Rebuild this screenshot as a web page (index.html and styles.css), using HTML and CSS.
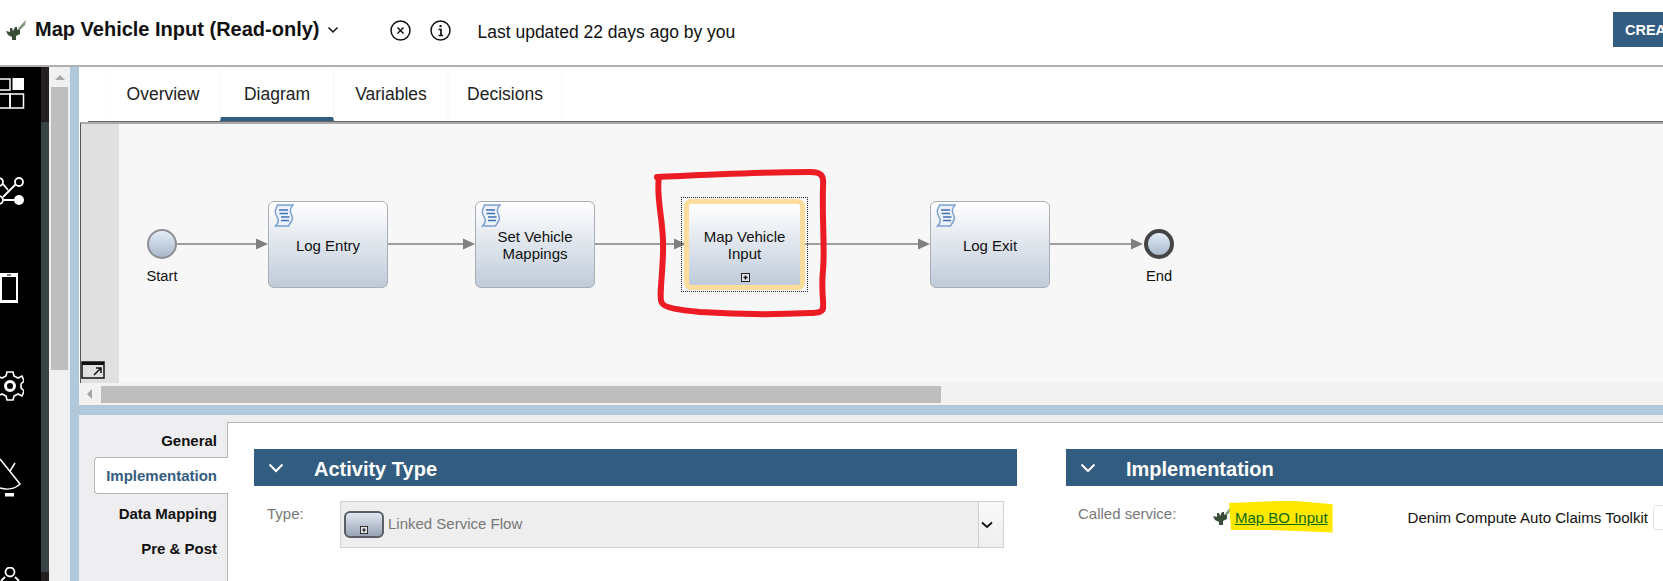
FILE: index.html
```html
<!DOCTYPE html>
<html lang="en">
<head>
    <meta charset="UTF-8">
    <meta name="viewport" content="width=device-width, initial-scale=1.0">
    <title>Map Vehicle Input</title>
    <link rel="stylesheet" href="styles.css">
</head>
<body>

    <svg class="defs" width="0" height="0">
        <defs>
            <symbol id="plug" viewBox="0 0 20 20">
                <path d="M10 11 L16 4 L20 0 L19 5 L13 11 Z" fill="#7f9a78"/>
                <path d="M0 11 L4 12 L4 8 L6 8 L7 11 L9 7 L11 7 L11 10 L14 10 L14 14 L10 16 L10 20 L6 20 L6 17 L2 15 Z" fill="#3a4d38"/>
            </symbol>
            <symbol id="script" viewBox="0 0 20 23">
                <path d="M3.500 1 H19 C16.500 3.500 15.500 6 17 9.500 C18.500 12.500 19 15 17.500 17 L14.500 22 H1.500 C4 19.500 5 17.500 4 15 C2.500 12 0.500 9 1.500 6 Z" fill="#eef3fa" stroke="#7a9fd0" stroke-width="1.500"/>
                <path d="M5 6 H14 M5.500 9.500 H14 M7 13 H15.500 M7 16.500 H15" stroke="#3f6fb5" stroke-width="1.600" fill="none"/>
            </symbol>
            <symbol id="sub" viewBox="0 0 9 9">
                <rect x="0.500" y="0.500" width="8" height="8" fill="#dfe3e8" stroke="#222"/>
                <path d="M2.500 4.500 H6.500 M4.500 2.500 V6.500" stroke="#111" stroke-width="1.400"/>
            </symbol>
        </defs>
    </svg>

    <header class="topbar">
        <svg class="title-icon"><use href="#plug"/></svg>
        <h1 class="title">Map Vehicle Input (Read-only)</h1>
        <svg class="title-caret" width="12" height="8" viewBox="0 0 12 8"><path d="M1.500 1.500 L6 6 L10.500 1.500" fill="none" stroke="#111" stroke-width="1.500"/></svg>
        <svg class="round-icon close-icon" width="21" height="21" viewBox="0 0 21 21">
            <circle cx="10.500" cy="10.500" r="9.500" fill="none" stroke="#111" stroke-width="1.500"/>
            <path d="M7.500 7.500 L13.500 13.500 M13.500 7.500 L7.500 13.500" stroke="#111" stroke-width="1.500"/>
        </svg>
        <svg class="round-icon info-icon" width="21" height="21" viewBox="0 0 21 21">
            <circle cx="10.500" cy="10.500" r="9.500" fill="none" stroke="#111" stroke-width="1.500"/>
            <path d="M8.500 9.500 H11 V15 M8.500 15.500 H13" fill="none" stroke="#111" stroke-width="1.700"/>
            <rect x="9.500" y="5" width="2" height="2.200" fill="#111"/>
        </svg>
        <span class="updated">Last updated 22 days ago by you</span>
        <button class="create">CREA</button>
    </header>

    <div class="workspace">
        <nav class="sidebar">
            <svg class="side-icon icon-grid" width="25" height="31" viewBox="0 0 25 31">
                <rect x="-8" y="1" width="18" height="11" fill="none" stroke="#fff" stroke-width="1.500"/>
                <rect x="12.500" y="0" width="11.500" height="12" fill="#fff"/>
                <rect x="-8" y="16" width="18" height="14" fill="none" stroke="#fff" stroke-width="1.500"/>
                <rect x="10" y="16" width="13.500" height="14" fill="none" stroke="#fff" stroke-width="1.500"/>
            </svg>
            <svg class="side-icon icon-flow" width="25" height="30" viewBox="0 0 25 30">
                <circle cx="19" cy="5" r="4" fill="none" stroke="#fff" stroke-width="1.800"/>
                <circle cx="19" cy="23" r="5" fill="#fff"/>
                <circle cx="-1" cy="5" r="4" fill="none" stroke="#fff" stroke-width="1.800"/>
                <circle cx="-1" cy="23" r="4" fill="none" stroke="#fff" stroke-width="1.800"/>
                <path d="M15.500 7.500 L3 20 M3 7 L8 13 M4 23 H14" fill="none" stroke="#fff" stroke-width="1.800"/>
            </svg>
            <svg class="side-icon icon-mobile" width="19" height="30" viewBox="0 0 19 30">
                <rect x="-1" y="0" width="19" height="30" fill="#fff"/>
                <rect x="2" y="4" width="14" height="23" fill="#000"/>
                <rect x="7" y="1.500" width="4" height="1" fill="#000"/>
            </svg>
            <svg class="side-icon icon-gear" width="24" height="30" viewBox="0 0 24 30">
                <path d="M7 1 H13 L14 5 L18 7 L22 5 L24 10 L21 13 V17 L24 20 L22 25 L18 23 L14 25 L13 29 H7 L6 25 L2 23 L-3 25 L-5 20 L-1 17 V13 L-5 10 L-3 5 L2 7 L6 5 Z" fill="none" stroke="#fff" stroke-width="1.600"/>
                <circle cx="10" cy="15" r="4.500" fill="none" stroke="#fff" stroke-width="3"/>
            </svg>
            <svg class="side-icon icon-dish" width="22" height="39" viewBox="0 0 22 39">
                <path d="M0 1 L20 26 C15 31 7 32 0 30" fill="none" stroke="#fff" stroke-width="1.500"/>
                <path d="M10 13 L15 5" stroke="#fff" stroke-width="1.500"/>
                <rect x="5" y="35" width="9" height="3.500" fill="#fff"/>
            </svg>
            <svg class="side-icon icon-flow2" width="25" height="14" viewBox="0 0 25 14">
                <circle cx="10" cy="5" r="4.500" fill="none" stroke="#fff" stroke-width="1.800"/>
                <path d="M5 10 L1 14 M15 10 L19 14" stroke="#fff" stroke-width="1.800"/>
            </svg>
        </nav>
        <div class="side-strip"></div>
        <div class="v-scroll">
            <span class="arrow-up"></span>
            <span class="v-thumb"></span>
        </div>
        <div class="blue-strip"></div>

        <main class="main">
            <div class="tabs">
                <a class="tab">Overview</a>
                <a class="tab active">Diagram</a>
                <a class="tab">Variables</a>
                <a class="tab">Decisions</a>
            </div>

            <div class="canvas">
                <div class="canvas-gutter"></div>

                <svg class="wires" width="1583" height="261" viewBox="80 122 1583 261">
                    <g stroke="#808080" stroke-width="1.500" fill="none">
                        <path d="M177 244 H258"/>
                        <path d="M388 244 H465"/>
                        <path d="M594 244 H676"/>
                        <path d="M804 244 H920"/>
                        <path d="M1049 244 H1133"/>
                    </g>
                    <g fill="#808080">
                        <path d="M256 238.500 L268 244 L256 249.500 Z"/>
                        <path d="M463 238.500 L475 244 L463 249.500 Z"/>
                        <path d="M674 238.500 L686 244 L674 249.500 Z"/>
                        <path d="M918 238.500 L930 244 L918 249.500 Z"/>
                        <path d="M1131 238.500 L1143 244 L1131 249.500 Z"/>
                    </g>
                </svg>

                <div class="event start"></div>
                <div class="event-label start-label">Start</div>

                <div class="task task-log-entry">
                    <svg class="task-icon"><use href="#script"/></svg>
                    <span>Log Entry</span>
                </div>
                <div class="task task-set">
                    <svg class="task-icon"><use href="#script"/></svg>
                    <span>Set Vehicle<br>Mappings</span>
                </div>

                <div class="selected">
                    <div class="task task-map">
                        <span>Map Vehicle<br>Input</span>
                        <svg class="sub-icon"><use href="#sub"/></svg>
                    </div>
                </div>

                <div class="task task-log-exit">
                    <svg class="task-icon"><use href="#script"/></svg>
                    <span>Log Exit</span>
                </div>

                <div class="event end"></div>
                <div class="event-label end-label">End</div>

                <svg class="annotation" width="1583" height="261" viewBox="80 122 1583 261">
                    <path d="M657 177 C700 175 760 172 810 172 C822 172 824 176 823 186 C822 220 825 250 823 270 C821 290 824 305 823 306 C824 312 818 313 810 313 C770 315 730 314 700 312 C680 310 664 308 662 303 C658 298 664 270 663 240 C662 215 656 195 659 177" fill="none" stroke="#ec1c24" stroke-width="6" stroke-linecap="round" stroke-linejoin="round"/>
                </svg>

                <div class="corner-btn">
                    <svg width="24" height="18" viewBox="0 0 24 18">
                        <rect x="1" y="1" width="22" height="16" fill="#e0e0e0" stroke="#111" stroke-width="1.500"/>
                        <rect x="1" y="1" width="22" height="3" fill="#111"/>
                        <path d="M13 14 L20 7 M15 7 H20 V12" fill="none" stroke="#111" stroke-width="1.500"/>
                    </svg>
                </div>
            </div>

            <div class="h-scroll">
                <span class="arrow-left"></span>
                <span class="h-thumb"></span>
            </div>
            <div class="splitter"></div>

            <section class="props">
                <div class="prop-tabs">
                    <a class="prop-tab">General</a>
                    <a class="prop-tab active">Implementation</a>
                    <a class="prop-tab">Data Mapping</a>
                    <a class="prop-tab">Pre &amp; Post</a>
                </div>
                <div class="prop-body">
                    <div class="group group-activity">
                        <div class="group-head">
                            <svg class="group-caret" width="16" height="10" viewBox="0 0 16 10"><path d="M1.500 1.500 L8 8 L14.500 1.500" fill="none" stroke="#fff" stroke-width="2"/></svg>
                            <span class="group-title">Activity Type</span>
                        </div>
                        <div class="type-row">
                            <label class="field-label">Type:</label>
                            <div class="type-select">
                                <span class="mini-task"><svg><use href="#sub"/></svg></span>
                                <span class="type-value">Linked Service Flow</span>
                                <span class="type-btn">
                                    <svg width="12" height="8" viewBox="0 0 12 8"><path d="M1 1.500 L6 6 L11 1.500" fill="none" stroke="#111" stroke-width="1.800"/></svg>
                                </span>
                            </div>
                        </div>
                    </div>

                    <div class="group group-impl">
                        <div class="group-head">
                            <svg class="group-caret" width="16" height="10" viewBox="0 0 16 10"><path d="M1.500 1.500 L8 8 L14.500 1.500" fill="none" stroke="#fff" stroke-width="2"/></svg>
                            <span class="group-title">Implementation</span>
                        </div>
                        <div class="called-row">
                            <label class="field-label called-label">Called service:</label>
                            <svg class="called-icon"><use href="#plug"/></svg>
                            <a class="called-link">Map BO Input</a>
                            <span class="toolkit">Denim Compute Auto Claims Toolkit</span>
                            <span class="toolkit-box"></span>
                        </div>
                    </div>
                </div>
            </section>
        </main>
    </div>

</body>
</html>
```

FILE: styles.css
```css
* {
    box-sizing: border-box;
}
html, body {
    height: 100%;
}
body {
    margin: 0;
    width: 1663px;
    height: 581px;
    overflow: hidden;
    display: flex;
    flex-direction: column;
    font-family: "Liberation Sans", Arial, sans-serif;
    color: #111;
    background-color: #fff;
}
.defs {
    position: absolute;
}

/* top bar */
.topbar {
    height: 67px;
    flex: none;
    display: flex;
    align-items: center;
    border-bottom: 2px solid #b0b0b0;
    padding-left: 6px;
}
.title-icon {
    width: 20px;
    height: 20px;
    margin-right: 9px;
    position: relative;
    top: -3px;
}
.title {
    margin: 0;
    font-size: 20px;
    font-weight: bold;
    white-space: nowrap;
    position: relative;
    top: -3px;
}
.title-caret {
    margin-left: 8px;
    position: relative;
    top: -3px;
}
.close-icon {
    margin-left: 51px;
}
.info-icon {
    margin-left: 19px;
}
.round-icon {
    flex: none;
    position: relative;
    top: -2px;
}
.updated {
    margin-left: 26px;
    font-size: 17.500px;
    white-space: nowrap;
}
.create {
    margin-left: auto;
    width: 50px;
    height: 35px;
    position: relative;
    top: -3px;
    border: none;
    overflow: hidden;
    padding: 0 0 0 12px;
    text-align: left;
    white-space: nowrap;
    background-color: #335d80;
    color: #fff;
    font-family: inherit;
    font-size: 14.500px;
    font-weight: bold;
}

/* left rail */
.workspace {
    flex: 1;
    display: flex;
    min-height: 0;
}
.sidebar {
    width: 41px;
    flex: none;
    background-color: #000;
    overflow: hidden;
    display: flex;
    flex-direction: column;
    align-items: flex-start;
}
.side-icon {
    display: block;
    flex: none;
}
.icon-grid { margin-top: 11px; }
.icon-flow { margin-top: 68px; }
.icon-mobile { margin-top: 66px; }
.icon-gear { margin-top: 68px; }
.icon-dish { margin-top: 57px; }
.icon-flow2 { margin-top: 70px; }
.side-strip {
    width: 8px;
    flex: none;
    background: linear-gradient(#231f20 0, #231f20 55px, #384345 55px, #384345 505px, #231f20 505px);
}
.v-scroll {
    width: 21px;
    flex: none;
    background-color: #f0f0f0;
    padding: 8px 2px 0;
    display: flex;
    flex-direction: column;
    align-items: center;
}
.arrow-up {
    width: 0;
    height: 0;
    border-left: 5px solid transparent;
    border-right: 5px solid transparent;
    border-bottom: 5px solid #a6a6a6;
}
.v-thumb {
    width: 17px;
    height: 283px;
    margin-top: 7px;
    background-color: #bebebe;
}
.blue-strip {
    width: 9px;
    flex: none;
    background-color: #b0c8da;
}

/* main column */
.main {
    flex: 1;
    min-width: 0;
    display: flex;
    flex-direction: column;
}
.tabs {
    height: 55px;
    flex: none;
    display: flex;
    padding-left: 27px;
    margin-left: 9px;
    border-bottom: 1px solid #666;
}
.tab {
    width: 114px;
    display: flex;
    align-items: center;
    justify-content: center;
    font-size: 17.500px;
    border: 1px solid #fafafa;
    border-bottom: none;
    border-radius: 6px 6px 0 0;
    color: #222;
}
.tabs .tab:first-child {
    margin-left: -9px;
}
.tab.active {
    padding-top: 4px;
    border-bottom: 4px solid #335d80;
}
.canvas {
    position: relative;
    height: 261px;
    flex: none;
    margin-left: 1px;
    background-color: #f7f7f7;
    border-top: 2px solid #aaa;
    border-left: 1px solid #555;
    overflow: hidden;
}
.canvas > * {
    position: absolute;
}
.canvas-gutter {
    left: 0;
    top: 0;
    bottom: 0;
    width: 38px;
    background-color: #e0e0e0;
}

/* diagram nodes: canvas origin is 81,124 on the page */
.wires {
    left: -1px;
    top: -2px;
}
.annotation {
    left: -1px;
    top: -2px;
    pointer-events: none;
}
.event {
    width: 30px;
    height: 30px;
    border-radius: 50%;
    background: linear-gradient(#e3edf8, #aab8ca);
    top: 105px;
}
.start {
    left: 66px;
    border: 2px solid #8d8f92;
}
.end {
    left: 1063px;
    border: 4px solid #454545;
}
.event-label {
    font-size: 14.700px;
    top: 144px;
    width: 60px;
    text-align: center;
}
.start-label {
    left: 51px;
}
.end-label {
    left: 1048px;
}
.task {
    width: 120px;
    height: 87px;
    top: 77px;
    display: flex;
    align-items: center;
    justify-content: center;
    text-align: center;
    font-size: 15px;
    line-height: 17px;
    padding-top: 1px;
    background: linear-gradient(#fff, #bfcbda);
    border: 1.500px solid #a9aeb5;
    border-radius: 6px;
}
.task-log-entry {
    left: 187px;
}
.task-set {
    left: 394px;
}
.task-log-exit {
    left: 849px;
}
.task-icon {
    position: absolute;
    left: 5px;
    top: 2px;
    width: 20px;
    height: 23px;
}
.selected {
    left: 600px;
    top: 73px;
    width: 127px;
    height: 95px;
    border: 1px dotted #222;
    padding: 1px 2px;
}
.selected .task {
    position: relative;
    top: 0;
    width: 100%;
    height: 100%;
    border: 5px solid #fedd9c;
    border-radius: 7px;
}
.sub-icon {
    position: absolute;
    left: 52px;
    bottom: 3px;
    width: 9px;
    height: 9px;
}
.corner-btn {
    left: 0;
    top: 237px;
    height: 18px;
}
.corner-btn svg {
    display: block;
}
.h-scroll {
    height: 22px;
    flex: none;
    background-color: #f2f2f2;
    display: flex;
    align-items: center;
    padding-left: 8px;
}
.arrow-left {
    width: 0;
    height: 0;
    border-top: 5px solid transparent;
    border-bottom: 5px solid transparent;
    border-right: 5px solid #a6a6a6;
}
.h-thumb {
    width: 840px;
    height: 17px;
    margin-left: 9px;
    background-color: #bebebe;
}
.splitter {
    height: 10px;
    flex: none;
    background-color: #b0c8da;
}

/* properties panel */
.props {
    flex: 1;
    display: flex;
    min-height: 0;
    background-color: #eeeef0;
}
.prop-tabs {
    width: 148px;
    flex: none;
    padding-top: 8px;
    display: flex;
    flex-direction: column;
    align-items: flex-end;
    font-size: 15px;
    font-weight: bold;
}
.prop-tab {
    height: 34px;
    display: flex;
    align-items: center;
    padding-right: 10px;
    color: #111;
}
.prop-tab + .prop-tab:not(.active) {
    margin-top: 2px;
}
.prop-tabs .prop-tab:last-child {
    margin-top: 1px;
}
.prop-tab.active {
    width: 134px;
    height: 37px;
    margin-right: -1px;
    padding-right: 11px;
    justify-content: flex-end;
    position: relative;
    z-index: 1;
    color: #335d80;
    background-color: #fff;
    border: 1px solid #b0b8b8;
    border-right: none;
    border-radius: 4px 0 0 4px;
}
.prop-body {
    flex: 1;
    min-width: 0;
    margin-top: 7px;
    padding: 26px 0 0 26px;
    display: flex;
    gap: 49px;
    background-color: #fff;
    border-top: 1px solid #b0b8b8;
    border-left: 1px solid #b0b8b8;
}
.group-activity {
    width: 763px;
    flex: none;
}
.group-impl {
    flex: 1;
    min-width: 0;
}
.group-head {
    height: 37px;
    display: flex;
    align-items: center;
    background-color: #335d80;
    color: #fff;
    font-size: 20px;
    font-weight: bold;
    white-space: nowrap;
}
.group-title {
    padding-top: 3px;
}
.group-caret {
    margin-left: 14px;
    margin-right: 30px;
    flex: none;
}
.field-label {
    font-size: 15px;
    color: #777;
}
.type-row {
    display: flex;
    margin-top: 15px;
}
.type-row .field-label {
    width: 86px;
    padding: 4px 0 0 13px;
}
.type-select {
    width: 664px;
    height: 47px;
    display: flex;
    align-items: center;
    padding-left: 3px;
    background-color: #eee;
    border: 1px solid #d0d0d0;
}
.mini-task {
    width: 40px;
    height: 27px;
    flex: none;
    display: flex;
    justify-content: center;
    align-items: flex-end;
    padding-bottom: 2px;
    background: linear-gradient(#dfe6f0, #9aa5b5);
    border: 2px solid #5a5f66;
    border-radius: 6px;
}
.mini-task svg {
    width: 8px;
    height: 8px;
}
.type-value {
    margin-left: 4px;
    padding-bottom: 2px;
    font-size: 15px;
    color: #777;
}
.type-btn {
    margin-left: auto;
    width: 25px;
    height: 100%;
    display: flex;
    align-items: center;
    padding-left: 2px;
    background: linear-gradient(#f9f9f9, #eee);
    border-left: 1px solid #d0d0d0;
}
.called-row {
    display: flex;
    align-items: center;
    height: 42px;
    margin-top: 15px;
    padding-left: 12px;
    white-space: nowrap;
}
.called-row > * {
    flex: none;
}
.called-label {
    width: 135px;
    position: relative;
    top: -9px;
}
.called-icon {
    width: 20px;
    height: 20px;
    position: relative;
    top: -7px;
}
.called-link {
    position: relative;
    top: -5px;
    margin-left: 2px;
    z-index: 0;
    font-size: 15px;
    color: #0b6a14;
    text-decoration: underline;
}
.called-link::before {
    content: "";
    position: absolute;
    z-index: -1;
    left: -6px;
    right: -5px;
    top: -8px;
    bottom: -7px;
    background-color: #ffe800;
    clip-path: polygon(0 8%, 60% 0, 100% 12%, 100% 100%, 40% 92%, 2% 92%);
}
.toolkit {
    margin-left: 80px;
    position: relative;
    top: -5px;
    font-size: 15.100px;
}
.toolkit-box {
    width: 20px;
    height: 25px;
    margin-left: 5px;
    position: relative;
    top: -5px;
    border: 1px solid #e4e4e4;
    border-radius: 3px;
}
```
